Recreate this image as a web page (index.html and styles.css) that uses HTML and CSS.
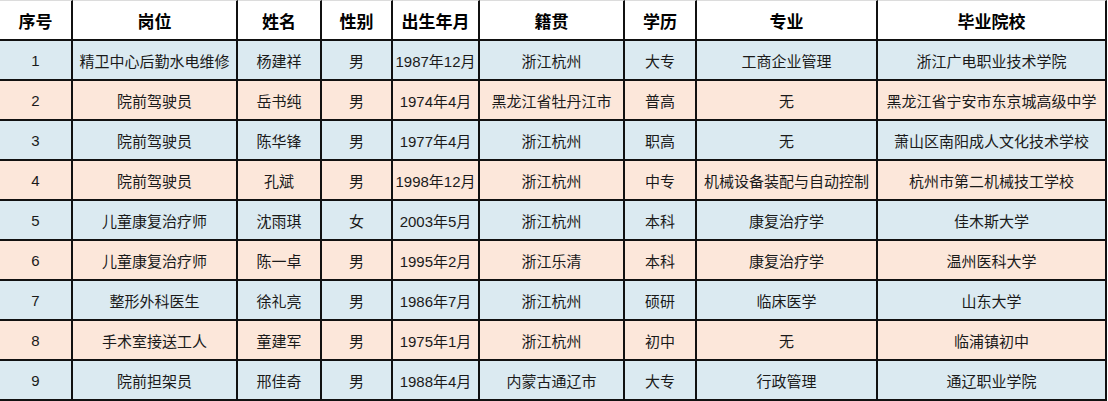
FILE: index.html
```html
<!DOCTYPE html>
<html lang="zh-CN">
<head>
<meta charset="utf-8">
<title>招聘人员名单</title>
<link rel="stylesheet" href="styles.css">
</head>
<body>
<div class="sheet">
  <div class="row head">
    <div>序号</div><div>岗位</div><div>姓名</div><div>性别</div><div>出生年月</div><div>籍贯</div><div>学历</div><div>专业</div><div>毕业院校</div>
  </div>
  <div class="row blue">
    <div>1</div><div>精卫中心后勤水电维修</div><div>杨建祥</div><div>男</div><div>1987年12月</div><div>浙江杭州</div><div>大专</div><div>工商企业管理</div><div>浙江广电职业技术学院</div>
  </div>
  <div class="row peach">
    <div>2</div><div>院前驾驶员</div><div>岳书纯</div><div>男</div><div>1974年4月</div><div>黑龙江省牡丹江市</div><div>普高</div><div>无</div><div>黑龙江省宁安市东京城高级中学</div>
  </div>
  <div class="row blue">
    <div>3</div><div>院前驾驶员</div><div>陈华锋</div><div>男</div><div>1977年4月</div><div>浙江杭州</div><div>职高</div><div>无</div><div>萧山区南阳成人文化技术学校</div>
  </div>
  <div class="row peach">
    <div>4</div><div>院前驾驶员</div><div>孔斌</div><div>男</div><div>1998年12月</div><div>浙江杭州</div><div>中专</div><div>机械设备装配与自动控制</div><div>杭州市第二机械技工学校</div>
  </div>
  <div class="row blue">
    <div>5</div><div>儿童康复治疗师</div><div>沈雨琪</div><div>女</div><div>2003年5月</div><div>浙江杭州</div><div>本科</div><div>康复治疗学</div><div>佳木斯大学</div>
  </div>
  <div class="row peach">
    <div>6</div><div>儿童康复治疗师</div><div>陈一卓</div><div>男</div><div>1995年2月</div><div>浙江乐清</div><div>本科</div><div>康复治疗学</div><div>温州医科大学</div>
  </div>
  <div class="row blue">
    <div>7</div><div>整形外科医生</div><div>徐礼亮</div><div>男</div><div>1986年7月</div><div>浙江杭州</div><div>硕研</div><div>临床医学</div><div>山东大学</div>
  </div>
  <div class="row peach">
    <div>8</div><div>手术室接送工人</div><div>童建军</div><div>男</div><div>1975年1月</div><div>浙江杭州</div><div>初中</div><div>无</div><div>临浦镇初中</div>
  </div>
  <div class="row blue">
    <div>9</div><div>院前担架员</div><div>邢佳奇</div><div>男</div><div>1988年4月</div><div>内蒙古通辽市</div><div>大专</div><div>行政管理</div><div>通辽职业学院</div>
  </div>
</div>
</body>
</html>
```

FILE: styles.css
```css
html, body {
  margin: 0;
  padding: 0;
  background: #ffffff;
}

.sheet {
  display: grid;
  grid-template-columns: 73px 165px 84px 71px 87px 145px 72px 181px 229px;
  grid-template-rows: 41px repeat(9, 40px);
  width: 1107px;
  font-family: "Liberation Sans", "Noto Sans CJK SC", sans-serif;
  font-size: 15px;
  color: #1a1a1a;
}

.row {
  display: contents;
}

.row > div {
  box-sizing: border-box;
  display: flex;
  align-items: center;
  justify-content: center;
  white-space: nowrap;
  border-right: 2px solid #111;
  border-bottom: 2px solid #111;
}

.row.head > div {
  background: #ffffff;
  border-top: 1px solid #dcdcdc;
  font-family: "Noto Sans CJK SC", sans-serif;
  font-weight: 700;
  font-size: 17px;
  color: #000;
}

.row.blue > div {
  background: #dbeaf1;
}

.row.peach > div {
  background: #fce7da;
}
```
